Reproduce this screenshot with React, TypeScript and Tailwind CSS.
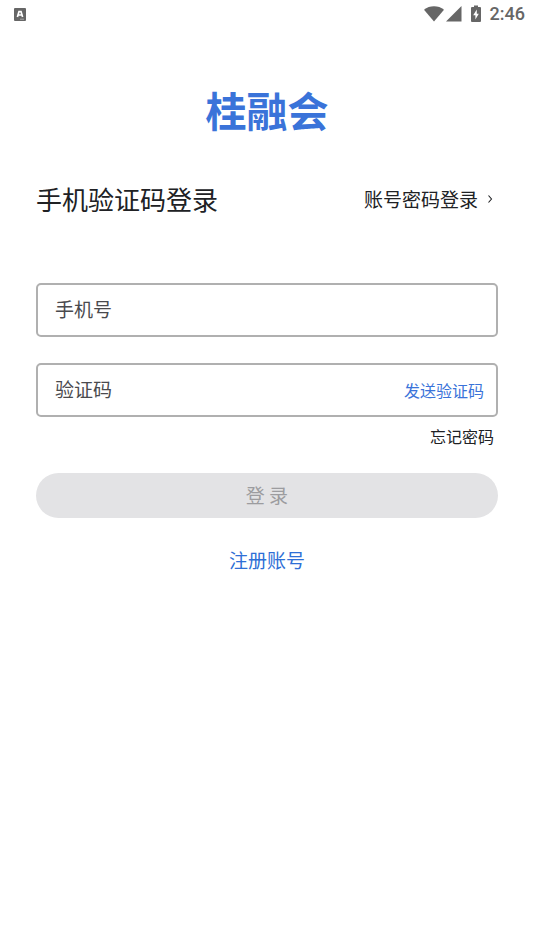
import { useState } from 'react';

function StatusBar() {
  return (
    <header className="flex h-7 items-center justify-between pl-3.5 pr-[9px] text-[#666666]">
      <svg width="12" height="13" viewBox="0 0 12 13" aria-hidden="true">
        <rect width="12" height="13" rx="1" fill="currentColor" />
        <path d="M3.4 9 L5 3.6 H7 L8.6 9 M4 7 H8" fill="none" stroke="#fff" strokeWidth="1.7" />
        <path d="M6 11.2 H10" stroke="#bbb" strokeWidth="0.8" />
      </svg>
      <div className="flex items-center">
        <svg width="20" height="16" viewBox="0 0 20 16" fill="currentColor" aria-hidden="true">
          <path d="M0 3.8 C5.5 -0.8 14.5 -0.8 20 3.8 L10 15.6 Z" />
        </svg>
        <svg className="ml-0.5" width="16" height="16" viewBox="0 0 16 16" fill="currentColor" aria-hidden="true">
          <path d="M15.5 0 V15.5 H0 Z" />
        </svg>
        <svg className="ml-2" width="12" height="18" viewBox="0 0 12 18" aria-hidden="true">
          <path d="M4 0.5 H8 V2 H10 Q11 2 11 3 V16 Q11 17 10 17 H2 Q1 17 1 16 V3 Q1 2 2 2 H4 Z" fill="currentColor" />
          <path d="M6.8 4.5 L3.2 10.2 H5.4 V14.4 L8.8 8.8 H6.8 Z" fill="#fff" />
        </svg>
        <span className="ml-2 font-['Roboto',sans-serif] text-lg font-medium leading-7">2:46</span>
      </div>
    </header>
  );
}

export default function App() {
  const [phone, setPhone] = useState('');
  const [code, setCode] = useState('');
  const ready = phone !== '' && code !== '';

  return (
    <div className="min-h-screen bg-white font-['Noto_Sans_CJK_SC',sans-serif] text-[#202124]">
      <StatusBar />
      <main className="px-9 pt-[53px]">
        <h1 className="text-center text-[41px] font-bold leading-[56px] text-[#3a73d9]">桂融会</h1>

        <div className="mt-[42px] flex items-center justify-between">
          <h2 className="text-[26px] leading-10">手机验证码登录</h2>
          <a href="#password" className="flex items-center gap-2 pr-1 text-[19px] leading-10">
            账号密码登录
            <svg width="8" height="10" viewBox="0 0 8 10" fill="none" stroke="currentColor" strokeWidth="1.1" aria-hidden="true">
              <path d="M2.5 1.5 L5.5 5 L2.5 8.5" />
            </svg>
          </a>
        </div>

        <form className="mt-16" onSubmit={e => e.preventDefault()}>
          <input
            type="tel"
            aria-label="手机号"
            placeholder="手机号"
            value={phone}
            onChange={e => setPhone(e.target.value)}
            className="block h-[54px] w-full rounded-[5px] border-2 border-[#b0b0b0] px-[17px] pb-1 text-[19px] outline-none placeholder:text-[#4a4a4e]"
          />
          <div className="mt-[26px] flex h-[54px] items-center rounded-[5px] border-2 border-[#b0b0b0] pr-3">
            <input
              type="text"
              aria-label="验证码"
              placeholder="验证码"
              value={code}
              onChange={e => setCode(e.target.value)}
              className="h-full min-w-0 flex-1 px-[17px] pb-1 text-[19px] outline-none placeholder:text-[#4a4a4e]"
            />
            <button type="button" className="text-base text-[#3a73d9]">发送验证码</button>
          </div>
          <div className="mt-[7px] flex justify-end pr-1">
            <a href="#forgot" className="text-base">忘记密码</a>
          </div>
          <button
            type="submit"
            disabled={!ready}
            className="mt-[25px] h-[45px] w-full rounded-full bg-[#3a73d9] text-[19px] text-white disabled:bg-[#e3e3e5] disabled:text-[#9c9c9f]"
          >
            登 录
          </button>
        </form>

        <div className="mt-7 text-center">
          <a href="#register" className="text-[19px] leading-7 text-[#2f6fd6]">注册账号</a>
        </div>
      </main>
    </div>
  );
}
